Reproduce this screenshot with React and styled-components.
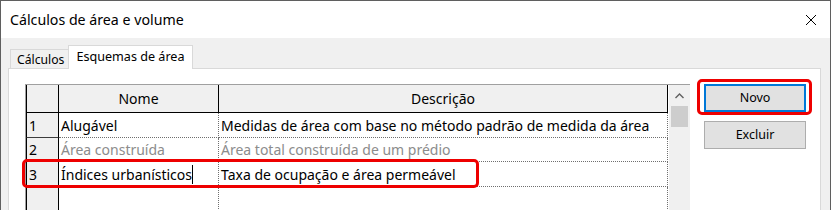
import React from "react";
import styled, { createGlobalStyle } from "styled-components";

const Global = createGlobalStyle`
  html, body { margin: 0; padding: 0; background: #f0f0f0; overflow: hidden; }
  body { font-family: "Segoe UI", "Noto Sans", sans-serif; }
`;

const Window = styled.div`
  width: 831px;
  height: 210px;
  box-sizing: border-box;
  border: 1px solid #5f5f5f;
  border-bottom: none;
  background: #f0f0f0;
  display: flex;
  flex-direction: column;
  overflow: hidden;
`;

const TitleBar = styled.div`
  height: 37px;
  flex: none;
  background: #fff;
  display: flex;
  align-items: center;
  justify-content: space-between;
  padding: 0 13px 0 9px;
`;

const Title = styled.div`
  font-size: 14.2px;
  color: #000;
  padding-bottom: 1px;
`;

const CloseBtn = styled.div`
  width: 12px;
  height: 12px;
  display: flex;
  svg { display: block; }
`;

const Body = styled.div`
  flex: 1;
  padding: 8px 9px 0 7px;
  display: flex;
  flex-direction: column;
`;

const TabStrip = styled.div`
  display: flex;
  align-items: flex-end;
  height: 23px;
  padding-left: 2px;
  position: relative;
  z-index: 1;
  margin-bottom: -1px;
`;

const Tab = styled.div`
  box-sizing: border-box;
  height: ${(p) => (p.$active ? "24px" : "20px")};
  padding: ${(p) => (p.$active ? "0 7px" : "0 4px 0 6px")};
  background: ${(p) => (p.$active ? "#fff" : "#f0f0f0")};
  border: 1px solid #d9d9d9;
  border-bottom: ${(p) => (p.$active ? "none" : "1px solid #d9d9d9")};
  margin-left: ${(p) => (p.$active ? "-1px" : "0")};
  font-size: ${(p) => (p.$active ? "12.6px" : "12.2px")};
  color: #000;
  display: flex;
  align-items: ${(p) => (p.$active ? "flex-start" : "center")};
  padding-top: ${(p) => (p.$active ? "2px" : "0")};
  white-space: nowrap;
`;

const Panel = styled.div`
  flex: 1;
  background: #fff;
  border: 1px solid #d9d9d9;
  border-bottom: none;
  padding: 10px 0 0 16px;
  display: flex;
  gap: 7px;
  align-items: flex-start;
`;

const TableBox = styled.div`
  position: relative;
  margin-top: 5px;
  width: 665px;
  height: 200px;
  box-sizing: border-box;
  border-top: 1px solid #a0a0a0;
  border-left: 1px solid #a0a0a0;
  display: flex;
`;

const Cells = styled.div`
  display: grid;
  grid-template-columns: 33px 160px 449px;
  grid-auto-rows: 24px;
  grid-template-rows: 28px 25px 24px 25px;
  align-content: start;
  flex: none;
  height: 100%;
`;

const HeadCell = styled.div`
  box-sizing: border-box;
  background: #f0f0f0;
  border-right: 1px solid #000;
  border-bottom: 1px solid #000;
  border-left: ${(p) => (p.$first ? "1px solid #000" : "none")};
  font-size: 14px;
  display: flex;
  align-items: center;
  justify-content: center;
  padding-bottom: 1px;
  color: #000;
`;

const RowHead = styled.div`
  box-sizing: border-box;
  background: #f0f0f0;
  border-left: 1px solid #000;
  border-right: 1px solid #000;
  border-bottom: 1px solid #3c3c3c;
  font-size: 14px;
  padding-left: 2px;
  display: flex;
  align-items: center;
  color: #000;
`;

const Cell = styled.div`
  box-sizing: border-box;
  background: #fff;
  border-right: 1px dotted #6f6f6f;
  border-bottom: 1px dotted #6f6f6f;
  font-size: 14px;
  padding-left: 2px;
  display: flex;
  align-items: center;
  white-space: nowrap;
  overflow: hidden;
  color: ${(p) => (p.$muted ? "#8c8c8c" : "#000")};
`;

const Caret = styled.span`
  display: inline-block;
  width: 1px;
  height: 19px;
  background: #000;
`;

const Scroll = styled.div`
  flex: none;
  width: 22px;
  background: #f0f0f0;
  display: flex;
  flex-direction: column;
  align-items: center;
  border-left: 1px solid #fff;
  box-sizing: border-box;
`;

const ScrollArrow = styled.div`
  height: 21px;
  width: 100%;
  display: flex;
  align-items: center;
  justify-content: center;
`;

const Thumb = styled.div`
  width: 17px;
  height: 21px;
  background: #cdcdcd;
`;

const RowMark = styled.div`
  position: absolute;
  left: -4px;
  top: 74px;
  width: 457px;
  height: 29px;
  box-sizing: border-box;
  border: 3px solid #ee0000;
  border-radius: 5px;
  pointer-events: none;
`;

const Side = styled.div`
  display: flex;
  flex-direction: column;
  gap: 6px;
`;

const Mark = styled.div`
  border: 3px solid #ee0000;
  border-radius: 5px;
  padding: 2px 3px 0 4px;
  width: 115px;
  box-sizing: border-box;
`;

const Button = styled.div`
  box-sizing: border-box;
  width: 102px;
  height: 28px;
  background: #e1e1e1;
  border: ${(p) => (p.$focused ? "2px solid #0078d7" : "1px solid #adadad")};
  margin-left: ${(p) => (p.$focused ? "0" : "7px")};
  font-size: 12.5px;
  color: #000;
  display: flex;
  align-items: center;
  justify-content: center;
  padding-bottom: 1px;
`;

const rows = [
  { n: "1", name: "Alugável", desc: "Medidas de área com base no método padrão de medida da área" },
  { n: "2", name: "Área construída", desc: "Área total construída de um prédio", muted: true },
  { n: "3", name: "Índices urbanísticos", desc: "Taxa de ocupação e área permeável", caret: true },
  { n: "", name: "", desc: "" },
  { n: "", name: "", desc: "" },
];

export default function App() {
  return (
    <>
      <Global />
      <Window>
        <TitleBar>
          <Title>Cálculos de área e volume</Title>
          <CloseBtn>
            <svg width="12" height="12" viewBox="0 0 12 12">
              <path d="M1 1 L11 11 M11 1 L1 11" stroke="#000" strokeWidth="1" fill="none" />
            </svg>
          </CloseBtn>
        </TitleBar>
        <Body>
          <TabStrip>
            <Tab>Cálculos</Tab>
            <Tab $active>Esquemas de área</Tab>
          </TabStrip>
          <Panel>
            <TableBox>
              <Cells>
                <HeadCell $first />
                <HeadCell>Nome</HeadCell>
                <HeadCell>Descrição</HeadCell>
                {rows.map((r, i) => (
                  <React.Fragment key={i}>
                    <RowHead>{r.n}</RowHead>
                    <Cell $muted={r.muted}>
                      {r.name}
                      {r.caret && <Caret />}
                    </Cell>
                    <Cell $muted={r.muted}>{r.desc}</Cell>
                  </React.Fragment>
                ))}
              </Cells>
              <Scroll>
                <ScrollArrow>
                  <svg width="9" height="6" viewBox="0 0 9 6">
                    <path d="M0.5 5 L4.5 1 L8.5 5" stroke="#606060" strokeWidth="1.4" fill="none" />
                  </svg>
                </ScrollArrow>
                <Thumb />
              </Scroll>
              <RowMark />
            </TableBox>
            <Side>
              <Mark>
                <Button $focused>Novo</Button>
              </Mark>
              <Button>Excluir</Button>
            </Side>
          </Panel>
        </Body>
      </Window>
    </>
  );
}
